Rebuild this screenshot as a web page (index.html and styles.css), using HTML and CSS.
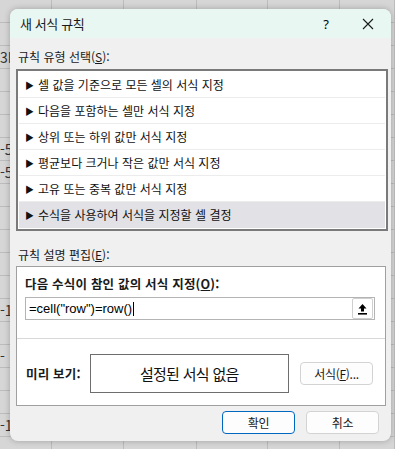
FILE: index.html
```html
<!DOCTYPE html>
<html lang="ko">
<head>
<meta charset="utf-8">
<title>새 서식 규칙</title>
<link rel="stylesheet" href="styles.css">
</head>
<body>
<div class="sheet">
  <div class="row"><span class="c"></span><span class="c"></span><span class="c"></span><span class="c"></span><span class="c"></span><span class="c"></span></div>
  <div class="row"><span class="c"></span><span class="c"></span><span class="c"></span><span class="c"></span><span class="c"></span><span class="c"></span></div>
  <div class="row"><span class="c frag">3H</span><span class="c"></span><span class="c"></span><span class="c"></span><span class="c"></span><span class="c"></span></div>
  <div class="row"><span class="c"></span><span class="c"></span><span class="c"></span><span class="c"></span><span class="c"></span><span class="c"></span></div>
  <div class="row"><span class="c"></span><span class="c"></span><span class="c"></span><span class="c"></span><span class="c"></span><span class="c"></span></div>
  <div class="row"><span class="c"></span><span class="c"></span><span class="c"></span><span class="c"></span><span class="c"></span><span class="c"></span></div>
  <div class="row"><span class="c frag">-5</span><span class="c"></span><span class="c"></span><span class="c"></span><span class="c"></span><span class="c"></span></div>
  <div class="row"><span class="c frag">-5</span><span class="c"></span><span class="c"></span><span class="c"></span><span class="c"></span><span class="c"></span></div>
  <div class="row"><span class="c"></span><span class="c"></span><span class="c"></span><span class="c"></span><span class="c"></span><span class="c"></span></div>
  <div class="row"><span class="c"></span><span class="c"></span><span class="c"></span><span class="c"></span><span class="c"></span><span class="c"></span></div>
  <div class="row"><span class="c"></span><span class="c"></span><span class="c"></span><span class="c"></span><span class="c"></span><span class="c"></span></div>
  <div class="row"><span class="c"></span><span class="c"></span><span class="c"></span><span class="c"></span><span class="c"></span><span class="c"></span></div>
  <div class="row"><span class="c"></span><span class="c"></span><span class="c"></span><span class="c"></span><span class="c"></span><span class="c"></span></div>
  <div class="row"><span class="c frag">-1</span><span class="c"></span><span class="c"></span><span class="c"></span><span class="c"></span><span class="c"></span></div>
  <div class="row"><span class="c"></span><span class="c"></span><span class="c"></span><span class="c"></span><span class="c"></span><span class="c"></span></div>
  <div class="row"><span class="c frag">-</span><span class="c"></span><span class="c"></span><span class="c"></span><span class="c"></span><span class="c"></span></div>
  <div class="row"><span class="c"></span><span class="c"></span><span class="c"></span><span class="c"></span><span class="c"></span><span class="c"></span></div>
  <div class="row"><span class="c"></span><span class="c"></span><span class="c"></span><span class="c"></span><span class="c"></span><span class="c"></span></div>
  <div class="row"><span class="c frag">-1</span><span class="c"></span><span class="c"></span><span class="c"></span><span class="c"></span><span class="c"></span></div>
  <div class="row"><span class="c"></span><span class="c"></span><span class="c"></span><span class="c"></span><span class="c"></span><span class="c"></span></div>
</div>

<div class="dialog">
  <div class="titlebar">
    <span class="title">새 서식 규칙</span>
    <span class="help">?</span>
    <svg class="close" width="12" height="12" viewBox="0 0 12 12"><path d="M1 1L11 11M11 1L1 11" stroke="#1a1a1a" stroke-width="1.1" fill="none"/></svg>
  </div>
  <div class="body">
    <div class="label">규칙 유형 선택(<u>S</u>):</div>
    <div class="list">
      <div class="item"><span class="tri">▶</span>셀 값을 기준으로 모든 셀의 서식 지정</div>
      <div class="item"><span class="tri">▶</span>다음을 포함하는 셀만 서식 지정</div>
      <div class="item"><span class="tri">▶</span>상위 또는 하위 값만 서식 지정</div>
      <div class="item"><span class="tri">▶</span>평균보다 크거나 작은 값만 서식 지정</div>
      <div class="item"><span class="tri">▶</span>고유 또는 중복 값만 서식 지정</div>
      <div class="item selected"><span class="tri">▶</span>수식을 사용하여 서식을 지정할 셀 결정</div>
    </div>
    <div class="label label2">규칙 설명 편집(<u>E</u>):</div>
    <div class="editbox">
      <div class="top">
        <div class="bold">다음 수식이 참인 값의 서식 지정(<u>O</u>):</div>
        <div class="input">
          <span class="formula">=cell("row")=row()<span class="caret"></span></span>
          <span class="refbtn"><svg width="11" height="12" viewBox="0 0 11 12"><path d="M5.5 1L1.5 5.5H4V8.5H7V5.5H9.5Z" fill="#000"/><rect x="1" y="10" width="9" height="1.6" fill="#000"/></svg></span>
        </div>
      </div>
      <div class="preview">
        <span class="bold">미리 보기:</span>
        <div class="pbox">설정된 서식 없음</div>
        <button class="btn fmt">서식(<u>F</u>)...</button>
      </div>
    </div>
    <div class="footer">
      <button class="btn ok">확인</button>
      <button class="btn">취소</button>
    </div>
  </div>
</div>
</body>
</html>
```

FILE: styles.css
```css
html, body {
  margin: 0;
  padding: 0;
}
body {
  width: 395px;
  height: 449px;
  overflow: hidden;
  position: relative;
  background: #d6d6d6;
  font-family: "Noto Sans CJK KR", "Noto Sans", sans-serif;
  font-size: 12px;
  color: #000;
}
.sheet {
  display: flex;
  flex-direction: column;
}
.row {
  display: grid;
  grid-template-columns: 52px 72px 73px 71px 72px 55px;
  height: 22px;
  border-bottom: 1px solid #bcbcbc;
}
.c {
  border-right: 1px solid #bcbcbc;
  font-size: 11px;
  color: #666;
  line-height: 22px;
  overflow: hidden;
  white-space: nowrap;
}
.c.frag {
  font-size: 14px;
  color: #333;
}
.dialog {
  position: absolute;
  left: 10px;
  top: 9px;
  width: 381px;
  height: 432px;
  border-radius: 8px;
  overflow: hidden;
  background: #f0f0f0;
  box-shadow: 0 0 6px rgba(0,0,0,0.25);
  display: flex;
  flex-direction: column;
  letter-spacing: 0;
}
.titlebar {
  height: 29px;
  background: #e8f7f2;
  display: flex;
  align-items: center;
  padding-left: 10px;
}
.title {
  font-size: 13px;
  flex: 1;
  color: #1a1a1a;
  letter-spacing: -0.4px;
}
.help {
  font-size: 13px;
  margin-right: 33px;
  font-family: "Noto Sans", sans-serif;
}
.close {
  margin-right: 17px;
}
.body {
  padding: 0 5px 0 6px;
  display: flex;
  flex-direction: column;
}
.label {
  margin: 10px 0 0 2px;
  height: 21px;
  line-height: 18px;
  color: #1a1a1a;
}
.label2 {
  margin-top: 15px;
  height: 20px;
}
u {
  text-decoration: underline;
  text-underline-offset: 1px;
}
.list {
  width: 366px;
  border: 2px solid #7a7a7a;
  background: #fff;
  padding: 1px;
  display: flex;
  flex-direction: column;
}
.item {
  height: 25px;
  line-height: 25px;
  border-bottom: 1px solid #ececec;
  padding-left: 6px;
  color: #111;
  white-space: nowrap;
}
.item.selected {
  border-bottom: none;
  background: #e1e1e6;
  height: 26px;
}
.tri {
  font-size: 9px;
  margin-right: 4px;
  display: inline-block;
  vertical-align: 1px;
}
.editbox {
  width: 368px;
  height: 138px;
  border: 1px solid #a0a0a0;
  background: #fff;
  display: flex;
  flex-direction: column;
}
.top {
  padding: 7px 10px 0 8px;
  height: 64px;
  border-bottom: 1px solid #d8d8d8;
}
.bold {
  font-weight: bold;
  font-size: 12.5px;
  letter-spacing: 0.2px;
  color: #1a1a1a;
}
.input {
  margin-top: 4px;
  height: 21px;
  border: 1px solid #b4b4b4;
  display: flex;
  align-items: center;
  justify-content: space-between;
  padding-left: 3px;
}
.formula {
  font-family: "Liberation Sans", Arial, sans-serif;
  font-size: 13px;
  letter-spacing: 0;
  display: flex;
  align-items: center;
}
.caret {
  display: inline-block;
  width: 1px;
  height: 14px;
  background: #000;
  margin-left: 1px;
}
.refbtn {
  width: 19px;
  height: 19px;
  border: 1px solid #cfcfcf;
  border-radius: 2px;
  display: flex;
  align-items: center;
  justify-content: center;
  margin-right: 1px;
}
.preview {
  flex: 1;
  display: flex;
  align-items: center;
  padding: 2px 12px 0 9px;
}
.pbox {
  margin-left: 9px;
  width: 197px;
  height: 37px;
  border: 1px solid #6e6e6e;
  display: flex;
  align-items: center;
  justify-content: center;
  font-size: 15px;
  letter-spacing: -0.7px;
  color: #111;
}
.btn {
  font-family: "Noto Sans CJK KR", "Noto Sans", sans-serif;
  font-size: 12px;
  letter-spacing: -0.3px;
  color: #1a1a1a;
  background: #fdfdfd;
  border: 1px solid #d3d3d3;
  border-radius: 4px;
  height: 23px;
  width: 73px;
  padding: 0;
}
.fmt {
  margin-left: auto;
}
.footer {
  display: flex;
  justify-content: flex-end;
  gap: 11px;
  padding: 5px 7px 0 0;
}
.btn.ok {
  border: 1px solid #0067c0;
}
```
